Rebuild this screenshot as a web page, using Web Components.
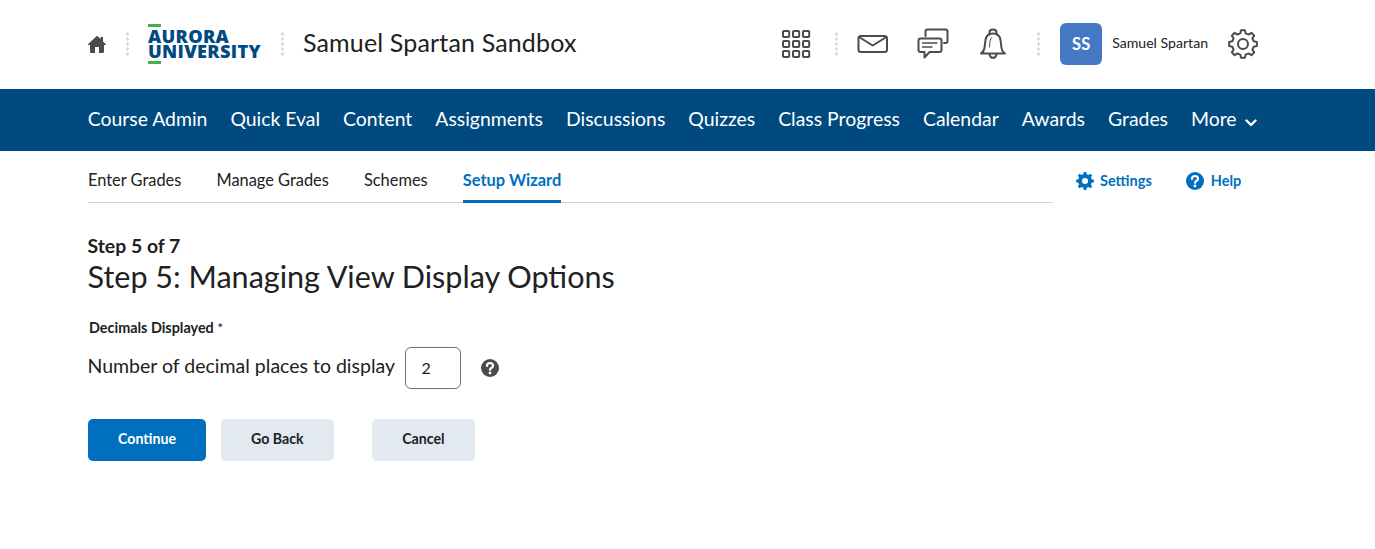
<!DOCTYPE html>
<html lang="en"><head><meta charset="utf-8"><title>Samuel Spartan Sandbox</title>
<style>
html,body{margin:0;padding:0;background:#fff;font-family:Lato,sans-serif;color:#202122}
</style></head><body>
<lms-header></lms-header>
<lms-nav></lms-nav>
<lms-page></lms-page>
<script>
function gear(c,R,r,n){const p=[];for(let i=0;i<n;i++){const a=i*2*Math.PI/n;const t=Math.PI/n;
 [[r,-t*.62],[R,-t*.36],[R,t*.36],[r,t*.62]].forEach(([q,o])=>p.push([c+q*Math.sin(a+o),c-q*Math.cos(a+o)]));}
 return 'M'+p.map(x=>x[0].toFixed(2)+' '+x[1].toFixed(2)).join('L')+'Z';}
const I={
 home:'<svg width="20" height="20" viewBox="0 0 20 20"><path fill="#494c4e" d="M10 1.800 L1 10.200 Q.7 11 1.500 11 H3 V18 Q3 19 4 19 H8 V13 H12 V19 H16 Q17 19 17 18 V11 H18.500 Q19.300 11 19 10.200 L16 7.400 V3 H13.500 V5.100 Z"/></svg>',
 grid:'<svg width="30" height="30" viewBox="0 0 30 30" fill="none" stroke="#494c4e" stroke-width="2">'+[2,12,22].map(y=>[2,12,22].map(x=>`<rect x="${x}" y="${y}" width="6.200" height="6" rx="1"/>`).join('')).join('')+'</svg>',
 mail:'<svg width="32" height="20" viewBox="0 0 32 20" fill="none" stroke="#494c4e" stroke-width="2" stroke-linejoin="round" stroke-linecap="round"><rect x="1.500" y="2" width="28.500" height="16" rx="2.500"/><path d="M2 3 L15.700 11.500 L29.500 3"/></svg>',
 chat:'<svg width="32" height="32" viewBox="0 0 32 32" fill="none" stroke="#494c4e" stroke-width="2" stroke-linejoin="round" stroke-linecap="round"><path d="M8.500 8V3.500Q8.500 1.500 10.500 1.500H28.500Q30.500 1.500 30.500 3.500V13Q30.500 15 28.500 15H27"/><path d="M3.500 10.500H22.500Q24.500 10.500 24.500 12.500V22Q24.500 24 22.500 24H12.500L7.500 29.500V24H3.500Q1.500 24 1.500 22V12.500Q1.500 10.500 3.500 10.500Z"/><path d="M5.500 15H20M5.500 19H15" stroke-width="1.300"/></svg>',
 bell:'<svg width="28" height="32" viewBox="0 0 28 32" fill="none" stroke="#494c4e" stroke-width="2" stroke-linejoin="round" stroke-linecap="round"><path d="M2 25.500 Q5 23.500 5.500 20 L6.500 12 Q7.500 5.500 14 5.500 Q20.500 5.500 21.500 12 L22.500 20 Q23 23.500 26 25.500 Z"/><path d="M10.500 6.500V4.500Q10.500 1.500 14 1.500Q17.500 1.500 17.500 4.500V6.500"/><path d="M10.500 26Q11 29.800 14 29.800Q17 29.800 17.500 26"/><path d="M10.500 19 L11 13 Q11.300 10.500 13 9.500" stroke-width="1"/></svg>',
 cog:`<svg width="30" height="30" viewBox="0 0 30 30" fill="none" stroke="#494c4e" stroke-width="2" stroke-linejoin="round"><circle cx="15" cy="15" r="5"/><path d="${gear(15,14,11,8)}"/></svg>`,
 gearFill:`<svg width="18" height="18" viewBox="0 0 18 18"><path fill="#006fbf" fill-rule="evenodd" d="${gear(9,9,6.900,8)}M9 6A3 3 0 1 0 9 12 3 3 0 1 0 9 6Z"/></svg>`,
 q:c=>`<svg width="18" height="18" viewBox="0 0 18 18"><circle cx="9" cy="9" r="9" fill="${c}"/><path d="M6 7Q6 4 9 4 12 4 12 6.700 12 8.200 10.300 9.100 9.100 9.700 9.100 10.800" fill="none" stroke="#fff" stroke-width="2.200" stroke-linecap="round"/><circle cx="9" cy="14" r="1.400" fill="#fff"/></svg>`
};
function def(n,html){customElements.define(n,class extends HTMLElement{constructor(){super();this.attachShadow({mode:'open'}).innerHTML=html}})}

def('lms-dots',`<style>:host{display:block;width:3px;height:24px;
 background:radial-gradient(circle at 1.5px 2px,#d6dde6 1.500px,transparent 1.600px) 0 0/3px 5px repeat-y}</style>`);

def('lms-logo',`<style>
:host{display:flex;flex-direction:column;width:114px;height:40px;color:#004a83;font:800 18.200px/15px "Open Sans",sans-serif;letter-spacing:.3px;white-space:nowrap}
i{display:block;width:13px;height:3px;background:#3fb24a;flex:none}
.t{flex:1;display:flex;flex-direction:column;justify-content:center;padding-top:1px}
</style><i></i><div class="t"><span>AURORA</span><span>UNIVERSITY</span></div><i></i>`);

def('lms-header',`<style>
:host{display:block;height:89px;box-sizing:border-box;padding:0 117px 2px 87px}
.r{display:flex;align-items:center;height:87px}
h1{font:400 25px/1 Lato,sans-serif;margin:0;padding-bottom:2px;color:#202122;letter-spacing:.15px}
.ic{display:flex;align-items:center;justify-content:center}
.av{width:42px;height:42px;border-radius:6px;background:#4478c4;color:#fff;font:700 16.500px/42px Lato,sans-serif;text-align:center}
.n{font:400 14.100px/1 Lato,sans-serif;color:#202122}
.sp{flex:1}
</style><div class="r">
<span class="ic" style="width:20px;margin-right:19px">${I.home}</span><lms-dots></lms-dots>
<lms-logo style="margin:0 19px 0 19px"></lms-logo><lms-dots></lms-dots>
<h1 style="margin-left:19px">Samuel Spartan Sandbox</h1><span class="sp"></span>
<span class="ic" style="margin-right:24px">${I.grid}</span><lms-dots></lms-dots>
<span class="ic" style="margin:0 28px 0 19px">${I.mail}</span>
<span class="ic" style="margin-right:30px">${I.chat}</span>
<span class="ic" style="margin-right:30px">${I.bell}</span><lms-dots></lms-dots>
<div class="av" style="margin-left:20px">SS</div><span class="n" style="margin:0 20px 0 10px">Samuel Spartan</span>
<span class="ic">${I.cog}</span>
</div>`);

def('lms-nav',`<style>
:host{display:block;height:62px;box-sizing:border-box;background:#004a80;padding:0 0 2px 87.700px;color:#fff}
.r{display:flex;align-items:center;height:60px;gap:23px;font:400 19.400px/1 Lato,sans-serif;white-space:nowrap}
svg{margin-left:8px;vertical-align:-1px}
</style><div class="r"><span>Course Admin</span><span>Quick Eval</span><span>Content</span><span>Assignments</span><span>Discussions</span><span>Quizzes</span><span>Class Progress</span><span>Calendar</span><span>Awards</span><span>Grades</span><span>More<svg width="12" height="8" viewBox="0 0 12 8" fill="none" stroke="#fff" stroke-width="2.400" stroke-linecap="round" stroke-linejoin="round"><path d="M1.500 1.500 6 6 10.500 1.500"/></svg></span></div>`);

def('lms-tabs',`<style>
:host{display:flex;height:52px;box-sizing:border-box;padding:0 117px 0 88px}
.t{display:flex;width:965px;gap:35.100px;border-bottom:1px solid #cdd5dc;font:400 16.400px/1 Lato,sans-serif;box-sizing:border-box}
.t span{display:flex;align-items:center;height:51px;box-sizing:border-box;padding-top:8px;color:#202122}
.t .a{color:#006fbf;font-weight:700;border-bottom:3px solid #006fbf;height:52px;padding-top:10px;padding-bottom:0}
.l{display:flex;margin-left:23px;gap:34px;padding-top:21px;font:700 14.500px/18px Lato,sans-serif;color:#006fbf}
.l span{display:flex;gap:6px;align-items:center;height:18px}
.l span+span{gap:7px}
</style><div class="t"><span>Enter Grades</span><span>Manage Grades</span><span>Schemes</span><span class="a">Setup Wizard</span></div>
<div class="l"><span>${I.gearFill}Settings</span><span>${I.q('#006fbf')}Help</span></div>`);

def('lms-btn',`<style>
:host{display:inline-flex;align-items:center;justify-content:center;height:42px;box-sizing:border-box;border-radius:5px;background:#e3e9f1;color:#202122;font:700 14.200px/1 Lato,sans-serif;padding:0 30px 2px}
:host([primary]){background:#006fbf;color:#fff}
</style><slot></slot>`);

def('lms-page',`<style>
:host{display:block}
.m{padding:0 87.500px}
.s{font:700 19.400px/1 Lato,sans-serif;margin-top:33px;color:#202122}
h2{font:400 30.550px/1 Lato,sans-serif;margin:7px 0 0;color:#202122}
.lb{font:700 14.400px/1 Lato,sans-serif;margin:28px 0 0 1.500px;color:#202122}
.lb small{font-weight:400;font-size:14px;color:#202122}
.f{display:flex;align-items:center;margin-top:12px;font:400 19.500px/1 Lato,sans-serif}
.f>span:first-child{padding-bottom:5px}
.in{width:56px;height:42px;box-sizing:border-box;border:1px solid #6e7376;border-radius:6px;margin-left:10px;font:400 16px/40px Lato,sans-serif;padding-left:15.500px}
.h{margin-left:20px;display:flex}
.b{display:flex;margin:30px 0 0 .5px}
</style><lms-tabs></lms-tabs><div class="m">
<div class="s">Step 5 of 7</div><h2>Step 5: Managing View Display Options</h2>
<div class="lb">Decimals Displayed <small>*</small></div>
<div class="f"><span>Number of decimal places to display</span><div class="in">2</div><span class="h">${I.q('#494c4e')}</span></div>
<div class="b"><lms-btn primary>Continue</lms-btn><lms-btn style="margin-left:15px">Go Back</lms-btn><lms-btn style="margin-left:38px;padding:0 30.500px 2px">Cancel</lms-btn></div>
</div>`);
</script></body></html>
